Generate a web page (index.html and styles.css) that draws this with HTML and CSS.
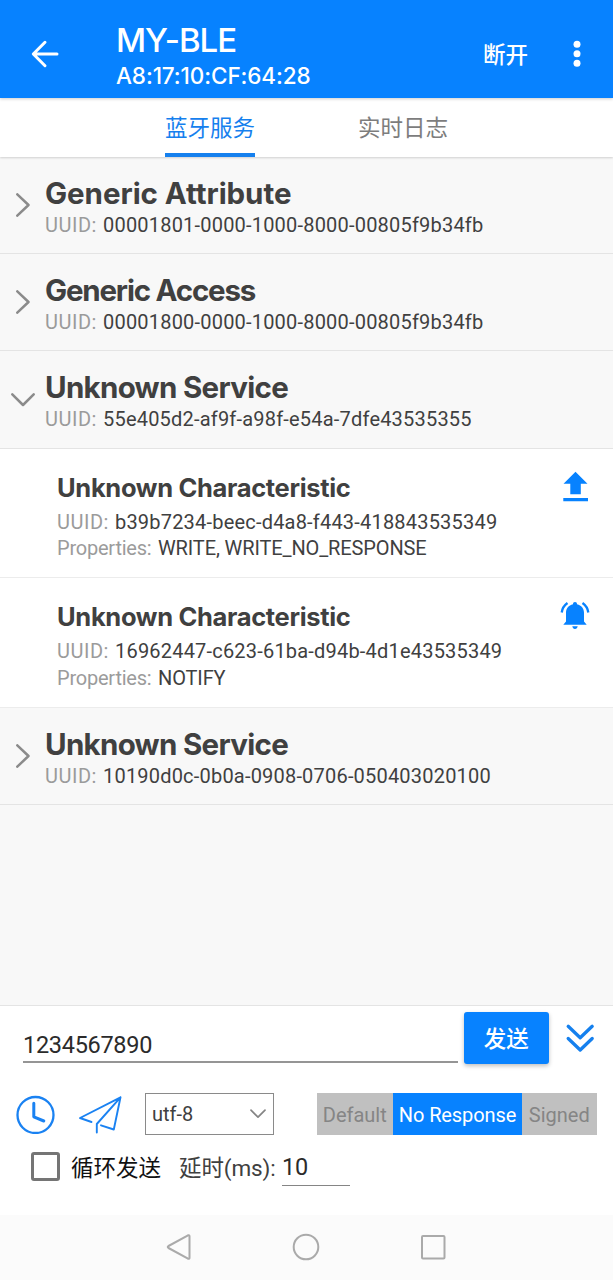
FILE: index.html
```html
<!DOCTYPE html>
<html lang="zh-CN">
<head>
<meta charset="utf-8">
<title>MY-BLE</title>
<link rel="stylesheet" href="styles.css">
</head>
<body>
<div class="app">
  <header class="appbar">
    <svg class="back" width="28" height="28" viewBox="0 0 28 28"><path d="M26 14H3M14 2.300 2.300 14 14 25.700"/></svg>
    <div class="device">
      <h1 class="device-name">MY-BLE</h1>
      <div class="device-mac">A8:17:10:CF:64:28</div>
    </div>
    <span class="disconnect">断开</span>
    <svg class="more" width="8" height="28" viewBox="0 0 8 28"><circle cx="4" cy="4.300" r="3.500"/><circle cx="4" cy="13.800" r="3.500"/><circle cx="4" cy="23.300" r="3.500"/></svg>
  </header>
  <nav class="tabs">
    <span class="tab active">蓝牙服务</span>
    <span class="tab">实时日志</span>
  </nav>
  <main class="services">
    <section class="service">
      <svg class="chevron" width="24" height="24" viewBox="0 0 24 24"><path d="M6.300 1.300 17.500 12 6.300 22.700"/></svg>
      <div class="info">
        <h2 class="service-name wide">Generic Attribute</h2>
        <p class="row"><span class="label">UUID:</span><span class="value">00001801-0000-1000-8000-00805f9b34fb</span></p>
      </div>
    </section>
    <section class="service">
      <svg class="chevron" width="24" height="24" viewBox="0 0 24 24"><path d="M6.300 1.300 17.500 12 6.300 22.700"/></svg>
      <div class="info">
        <h2 class="service-name tight">Generic Access</h2>
        <p class="row"><span class="label">UUID:</span><span class="value">00001800-0000-1000-8000-00805f9b34fb</span></p>
      </div>
    </section>
    <section class="service">
      <svg class="chevron" width="24" height="24" viewBox="0 0 24 24"><path d="M1.300 7.300 12 18 22.700 7.300"/></svg>
      <div class="info">
        <h2 class="service-name">Unknown Service</h2>
        <p class="row"><span class="label">UUID:</span><span class="value">55e405d2-af9f-a98f-e54a-7dfe43535355</span></p>
      </div>
    </section>
    <article class="characteristic">
      <div class="info">
        <h3 class="char-name">Unknown Characteristic</h3>
        <p class="row"><span class="label">UUID:</span><span class="value">b39b7234-beec-d4a8-f443-418843535349</span></p>
        <p class="row"><span class="label props">Properties:</span><span class="value caps">WRITE, WRITE_NO_RESPONSE</span></p>
      </div>
      <svg class="action" width="30" height="33" viewBox="0 0 30 33"><path d="M15.500 2.700 27.500 14.700H20.800V25.200H10.300V14.700H3.500ZM3.300 29H28V32.300H3.300Z"/></svg>
    </article>
    <article class="characteristic">
      <div class="info">
        <h3 class="char-name">Unknown Characteristic</h3>
        <p class="row"><span class="label">UUID:</span><span class="value">16962447-c623-61ba-d94b-4d1e43535349</span></p>
        <p class="row"><span class="label props">Properties:</span><span class="value caps">NOTIFY</span></p>
      </div>
      <svg class="action" width="30" height="33" viewBox="0 -1 30 33"><path d="M15 3c1.300 0 2 .8 2 2.200 4.500 1 7 4.300 7 8.600V22.500l2.700 3.300H3.300l2.700-3.300v-8.700c0-4.300 2.500-7.600 7-8.600 0-1.400.7-2.200 2-2.200ZM12.300 27.300h5.400c-.2 1.600-1.300 2.600-2.700 2.600s-2.500-1-2.700-2.600Z"/><path class="wave" d="M7.500 4C4 6.500 2.200 9.500 1.700 13.500M22.500 4c3.500 2.500 5.300 5.500 5.800 9.500"/></svg>
    </article>
    <section class="service">
      <svg class="chevron" width="24" height="24" viewBox="0 0 24 24"><path d="M6.300 1.300 17.500 12 6.300 22.700"/></svg>
      <div class="info">
        <h2 class="service-name">Unknown Service</h2>
        <p class="row"><span class="label">UUID:</span><span class="value">10190d0c-0b0a-0908-0706-050403020100</span></p>
      </div>
    </section>
  </main>
  <footer class="composer">
    <div class="send-row">
      <input class="message" value="1234567890">
      <button class="send">发送</button>
      <svg class="expand" width="30" height="30" viewBox="0 0 30 30"><path d="M3.200 3.300 15.200 14.800 27.200 3.300M3.200 15.500 15.200 27 27.200 15.500"/></svg>
    </div>
    <div class="options-row">
      <svg class="clock" width="40" height="40" viewBox="0 0 40 40"><circle cx="20.500" cy="21" r="18"/><path d="M18.800 9.300v13.500L28.800 27"/></svg>
      <svg class="plane" width="44" height="40" viewBox="0 0 44 40"><path d="M13.500 28 2 24 42.500 3.300 35.800 35.500 23 31.300M18.800 38.500V30L42.500 3.300"/></svg>
      <div class="encoding"><span>utf-8</span><svg width="16" height="10" viewBox="0 0 16 10"><path d="M1 1.200 8 8.200 15 1.200"/></svg></div>
      <div class="write-type"><span class="seg default">Default</span><span class="seg selected">No Response</span><span class="seg signed">Signed</span></div>
    </div>
    <div class="loop-row">
      <span class="checkbox"></span>
      <span class="loop-label">循环发送</span>
      <span class="delay-label">延时(ms):</span>
      <input class="delay" value="10">
    </div>
  </footer>
  <div class="navbar">
    <svg width="26" height="28" viewBox="0 0 26 28"><path d="M22 2.300 2.500 13q-1.500 1 0 2L22 25.700q1.500.6 1.500-1V3.300q0-1.600-1.500-1Z"/></svg>
    <svg width="28" height="28" viewBox="0 0 28 28"><circle cx="14" cy="14" r="12.300"/></svg>
    <svg width="26" height="28" viewBox="0 0 26 28"><rect x="2" y="3" width="22.500" height="22.500" rx="1"/></svg>
  </div>
</div>
</body>
</html>
```
FILE: styles.css
```css
* { box-sizing: border-box; }
body { margin: 0; background: #f8f8f8; font-family: Roboto, "Noto Sans CJK SC", sans-serif; color: #404040; }
h1, h2, h3, p { margin: 0; }
svg { display: block; flex: none; fill: none; stroke-linecap: round; stroke-linejoin: round; }
input { border: 0; padding: 0; margin: 0; outline: 0; background: none; font: inherit; color: #2b2b2b; border-radius: 0; }
.app { width: 613px; height: 1280px; display: flex; flex-direction: column; white-space: nowrap; overflow: hidden; }

.appbar { height: 98px; flex: none; display: flex; align-items: center; padding: 10px 32px 0 31px; background: #0782ff; color: #fff; box-shadow: 0 1px 3px rgba(0,0,0,.2); position: relative; }
.back { stroke: #fff; stroke-width: 3; }
.device { margin-left: 57px; flex: 1; padding-top: 4px; }
.device-name { font: 500 33px/40px Inter, sans-serif; height: 40px; letter-spacing: -1px; }
.device-mac { font: 500 22.500px/32px Inter, sans-serif; letter-spacing: -.1px; }
.disconnect { font-size: 22.500px; font-weight: 500; margin: -2px 45px 0 0; }
.more { fill: #fff; }

.tabs { height: 58.500px; flex: none; display: flex; gap: 103px; padding-left: 165px; background: #fff; font-size: 22.500px; color: #7d7d7d; box-shadow: 0 1px 2px rgba(0,0,0,.16); }
.tab { line-height: 61px; height: 58.500px; }
.active { color: #1580ee; border-bottom: 4px solid #1580ee; }

.services { flex: 1; padding-top: .5px; }
.service { height: 97.200px; display: flex; border-bottom: 1px solid #e4e4e4; padding-left: 11px; }
.chevron { stroke: #8b8b8b; stroke-width: 2.500; margin-top: 36px; }
.service .info { margin-left: 10px; padding-top: 17px; }
.service-name { font: 650 29.500px/39px Inter, sans-serif; letter-spacing: -.7px; }
.wide { letter-spacing: -.050px; }
.tight { letter-spacing: -1.200px; }
.row { font-size: 20px; line-height: 26.500px; display: flex; }
.service .row { line-height: 25.500px; }
.label { color: #9b9b9b; width: 58px; letter-spacing: .5px; }
.props { width: 101px; letter-spacing: -.220px; }
.value { letter-spacing: .2px; }
.caps { letter-spacing: -.120px; }
.characteristic { height: 129.500px; background: #fff; border-bottom: 1px solid #ececec; display: flex; justify-content: space-between; padding: 20px 23px 0 57px; }
.char-name { font: 650 25.500px/38px Inter, sans-serif; letter-spacing: -.330px; margin-bottom: 2px; }
.action { fill: #0782ff; }
.wave { fill: none; stroke: #0782ff; stroke-width: 2.300; stroke-linecap: butt; }

.composer { height: 210px; flex: none; background: #fff; border-top: 1.500px solid #e4e4e4; }
.send-row { display: flex; padding: 6px 17px 0 23px; }
.message { width: 435px; height: 51px; padding-top: 16px; font-size: 23.500px; letter-spacing: -.3px; border-bottom: 2px solid #959595; }
.send { margin-left: 6px; width: 84.500px; height: 52px; border: 0; border-radius: 3px; background: #0782ff; color: #fff; font: 500 22.500px "Noto Sans CJK SC", sans-serif; padding: 0 0 2px; box-shadow: 0 2px 4px rgba(0,0,0,.25); }
.expand { stroke: #1580ee; stroke-width: 3.300; margin: 11px 0 0 16.500px; }
.options-row { display: flex; align-items: center; margin-top: 29px; height: 42px; padding-left: 15px; font-size: 20px; }
.clock, .plane { stroke: #1a82f2; stroke-width: 2.300; }
.clock path { stroke-width: 3; }
.plane { margin-left: 22.500px; stroke-width: 1.900; }
.encoding { margin-left: 23.500px; width: 129px; height: 42px; border: 1.500px solid #8a8a8a; display: flex; align-items: center; justify-content: space-between; padding: 0 7px 0 6px; }
.encoding svg { stroke: #858585; stroke-width: 1.700; }
.write-type { margin-left: 42.500px; height: 42px; display: flex; text-align: center; line-height: 44px; color: #858585; background: #c0c0c0; }
.seg.default { width: 76.500px; }
.seg.selected { width: 129px; background: #0782ff; color: #fff; letter-spacing: -.1px; }
.seg.signed { width: 74.500px; }
.loop-row { display: flex; align-items: center; height: 52px; margin-top: 5px; padding-left: 30.500px; font-size: 22.500px; }
.checkbox { width: 29px; height: 29px; border: 3px solid #757575; border-radius: 3px; }
.loop-label { margin-left: 11.500px; color: #111; }
.delay-label { margin-left: 18px; width: 97px; letter-spacing: -.1px; }
.delay { margin-left: 6px; width: 68px; height: 39px; font-size: 23.500px; letter-spacing: -.3px; padding-top: 2px; border-bottom: 1.500px solid #858585; }

.navbar { height: 65px; flex: none; background: #fbfbfb; display: flex; justify-content: center; align-items: center; gap: 100px; padding: 0 2px 2px 0; }
.navbar svg { stroke: #aaa; stroke-width: 2; }
```
